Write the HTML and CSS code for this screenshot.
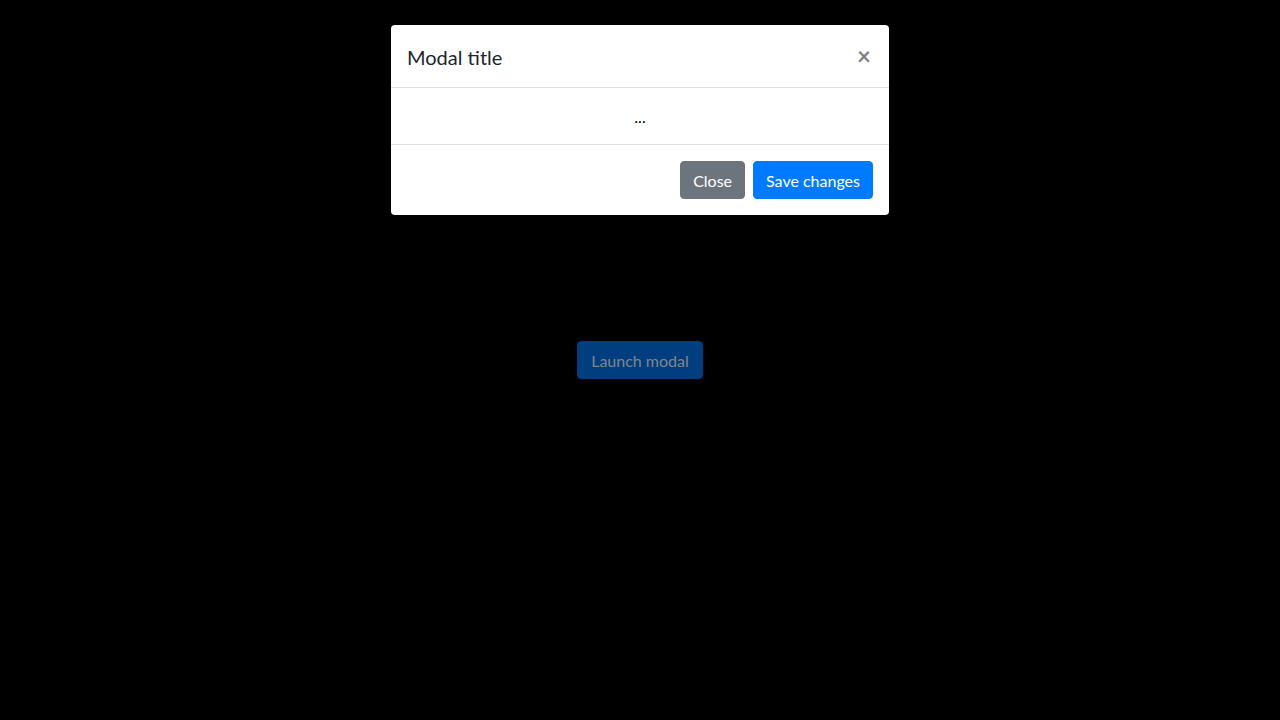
FILE: index.html
```html
<!DOCTYPE html>
<html lang="en">
<head>
<meta charset="utf-8">
<title>Modal</title>
<link rel="stylesheet" href="styles.css">
</head>
<body>
<main class="page">
  <button class="btn btn-launch" type="button">Launch modal</button>
</main>
<div class="backdrop">
  <div class="modal-dialog">
    <div class="modal-content">
      <div class="modal-header">
        <h5 class="modal-title">Modal title</h5>
        <button class="close" type="button" aria-label="Close">&times;</button>
      </div>
      <div class="modal-body">...</div>
      <div class="modal-footer">
        <button class="btn btn-secondary" type="button">Close</button>
        <button class="btn btn-primary" type="button">Save changes</button>
      </div>
    </div>
  </div>
</div>
</body>
</html>
```
FILE: styles.css
```css
* { box-sizing: border-box; }
html, body {
  margin: 0;
  height: 100%;
}
body {
  background: #000;
  font-family: "Segoe UI", Lato, "Noto Sans", sans-serif;
  font-size: 16px;
  line-height: 1.5;
  color: #212529;
}
.page {
  height: 100%;
  display: flex;
  align-items: center;
  justify-content: center;
}
.btn {
  font-family: inherit;
  font-size: 16px;
  line-height: 24px;
  height: 38px;
  padding: 7px 12px 5px;
  border: 1px solid transparent;
  border-radius: 4px;
  cursor: pointer;
}
.btn-launch {
  background: #003e80;
  border-color: #003e80;
  color: #80868c;
  padding: 7px 13px 5px;
}
.backdrop {
  position: fixed;
  inset: 0;
  display: flex;
  justify-content: center;
  align-items: flex-start;
}
.modal-dialog {
  width: 498px;
  margin-top: 25px;
}
.modal-content {
  background: #fff;
  border-radius: 4px;
  display: flex;
  flex-direction: column;
}
.modal-header {
  display: flex;
  align-items: flex-start;
  justify-content: space-between;
  height: 63px;
  padding: 17px 16px 15px;
  border-bottom: 1px solid #dee2e6;
}
.modal-title {
  margin: 0;
  font-size: 20px;
  font-weight: 400;
  line-height: 30px;
  color: #212529;
}
.close {
  background: transparent;
  border: 0;
  padding: 0;
  margin: 2px 2px 0 0;
  font-family: inherit;
  font-size: 24px;
  font-weight: 700;
  line-height: 24px;
  color: #000;
  opacity: .5;
  text-shadow: 0 1px 0 #fff;
  cursor: pointer;
}
.modal-body {
  height: 57px;
  padding: 17px 16px 15px;
  line-height: 24px;
  text-align: center;
  color: #000;
  border-bottom: 1px solid #dee2e6;
}
.modal-footer {
  display: flex;
  justify-content: flex-end;
  align-items: center;
  gap: 8px;
  height: 70px;
  padding: 16px;
}
.btn-secondary {
  background: #6c757d;
  border-color: #6c757d;
  color: #fff;
}
.btn-primary {
  background: #007bff;
  border-color: #007bff;
  color: #fff;
}
```
